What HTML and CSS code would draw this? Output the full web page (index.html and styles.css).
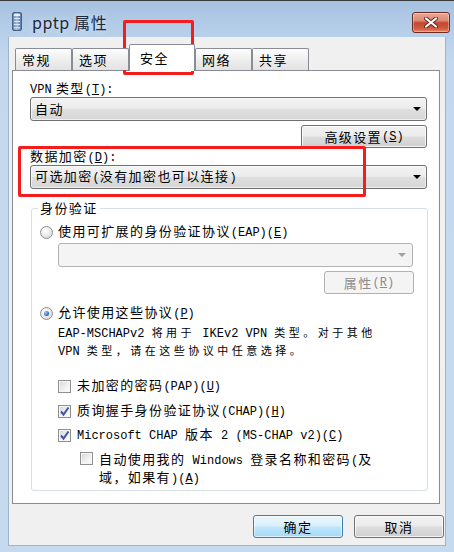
FILE: index.html
```html
<!DOCTYPE html>
<html>
<head>
<meta charset="utf-8">
<link rel="stylesheet" href="styles.css">
</head>
<body>
<div class="window">
  <div class="titlebar">
    <svg class="app-icon" width="10" height="19" viewBox="0 0 10 19">
      <defs>
        <linearGradient id="ig" x1="0" y1="0" x2="1" y2="0">
          <stop offset="0" stop-color="#5d7fae"/>
          <stop offset="0.5" stop-color="#a9c0de"/>
          <stop offset="1" stop-color="#4d6d9c"/>
        </linearGradient>
      </defs>
      <rect x="0.5" y="0.5" width="9" height="18" rx="1.5" fill="url(#ig)" stroke="#4a6288"/>
      <rect x="2" y="2" width="6" height="2" fill="#e8f0fa"/>
      <rect x="2" y="6" width="6" height="1" fill="#dce6f4"/>
      <rect x="2" y="9" width="6" height="1" fill="#dce6f4"/>
      <rect x="2" y="12" width="6" height="1" fill="#dce6f4"/>
      <rect x="2" y="15" width="6" height="1.5" fill="#c9d7ec"/>
    </svg>
    <span class="title">pptp 属性</span>
    <div class="close">
      <svg width="16" height="11" viewBox="0 0 16 11">
        <path d="M3 1.5 L13 9.5 M13 1.5 L3 9.5" stroke="#5b2a22" stroke-width="4" stroke-linecap="round"/>
        <path d="M3 1.5 L13 9.5 M13 1.5 L3 9.5" stroke="#ffffff" stroke-width="2.2" stroke-linecap="round"/>
      </svg>
    </div>
  </div>
  <div class="client">
    <div class="tabs">
      <div class="tab">常规</div>
      <div class="tab">选项</div>
      <div class="tab active">安全</div>
      <div class="tab">网络</div>
      <div class="tab">共享</div>
    </div>
    <div class="panel">
      <div class="label"><span class="m">VPN</span> 类型<span class="m">(<u>T</u>):</span></div>
      <div class="combo"><span>自动</span><span class="arrow"></span></div>
      <div class="btn-row"><div class="btn adv">高级设置<span class="m">(<u>S</u>)</span></div></div>
      <div class="label label2">数据加密<span class="m">(<u>D</u>):</span></div>
      <div class="combo"><span>可选加密<span class="m">(</span>没有加密也可以连接<span class="m">)</span></span><span class="arrow"></span></div>
      <fieldset class="group">
        <legend>身份验证</legend>
        <div class="radio-row first"><span class="radio"></span><span>使用可扩展的身份验证协议<span class="m">(EAP)(<u>E</u>)</span></span></div>
        <div class="combo disabled"><span class="arrow"></span></div>
        <div class="btn-row"><div class="btn disabled">属性<span class="m">(<u>R</u>)</span></div></div>
        <div class="radio-row second"><span class="radio checked"></span><span>允许使用这些协议<span class="m">(<u>P</u>)</span></span></div>
        <div class="note"><span class="m">EAP-MSCHAPv2 </span>将用于<span class="m"> IKEv2 VPN </span>类型。对于其他<br><span class="m">VPN </span>类型，请在这些协议中任意选择。</div>
        <div class="check-row pap"><span class="cb"></span><span>未加密的密码<span class="m">(PAP)(<u>U</u>)</span></span></div>
        <div class="check-row chap"><span class="cb checked"><svg width="11" height="11" viewBox="0 0 11 11"><path d="M2 5.5 L4.5 8.5 L9.5 1.5" fill="none" stroke="#3f55a0" stroke-width="2"/></svg></span><span>质询握手身份验证协议<span class="m">(CHAP)(<u>H</u>)</span></span></div>
        <div class="check-row mschap"><span class="cb checked"><svg width="11" height="11" viewBox="0 0 11 11"><path d="M2 5.5 L4.5 8.5 L9.5 1.5" fill="none" stroke="#3f55a0" stroke-width="2"/></svg></span><span><span class="m">Microsoft CHAP </span>版本<span class="m"> 2 (MS-CHAP v2)(<u>C</u>)</span></span></div>
        <div class="check-row auto"><span class="cb"></span><span class="auto-text">自动使用我的<span class="m"> Windows </span>登录名称和密码<span class="m">(</span>及<br>域，如果有<span class="m">)(<u>A</u>)</span></span></div>
      </fieldset>
    </div>
    <div class="footer">
      <div class="btn default">确定</div>
      <div class="btn">取消</div>
    </div>
  </div>
  <div class="redbox r1"></div>
  <div class="redbox r2"></div>
</div>
</body>
</html>
```

FILE: styles.css
```css
* { box-sizing: border-box; }
html, body { margin: 0; padding: 0; }
body {
  width: 454px;
  height: 552px;
  overflow: hidden;
  background: #c4d8ee;
  font-family: "Noto Sans CJK SC", "Noto Sans", sans-serif;
  font-size: 13px;
  letter-spacing: 1.4px;
  color: #000;
}
.m {
  font-family: "Liberation Mono", "Noto Sans CJK SC", monospace;
  font-size: 12px;
  letter-spacing: 0;
}
u { text-decoration: underline; text-underline-offset: 1px; }

.window {
  position: relative;
  width: 454px;
  height: 552px;
  border-top: 1px solid #3a3a3a;
  background: linear-gradient(#a6c2e1 0, #b9d0ea 36px, #c3d8ee 60px, #c6daef);
  display: flex;
  flex-direction: column;
}
.titlebar {
  height: 36px;
  display: flex;
  align-items: flex-start;
  padding: 11px 4px 0 12px;
}
.app-icon { flex: none; display: block; }
.title {
  margin-left: 10px;
  font-size: 16px;
  line-height: 20px;
  letter-spacing: 0.6px;
  color: #1d2a3c;
  text-shadow: 0 0 6px rgba(255,255,255,0.7);
}
.close {
  margin-left: auto;
  width: 38px;
  height: 21px;
  border: 1px solid #6a2c22;
  border-radius: 3px;
  background: linear-gradient(#eaa795 0, #d98a76 40%, #c5462f 52%, #cf5a3e 80%, #e3866a);
  box-shadow: inset 0 0 0 1px rgba(255,255,255,0.35);
  display: flex;
  align-items: center;
  justify-content: center;
}
.close svg { display: block; }

.client {
  flex: none;
  margin: 0 8px;
  height: 509px;
  background: #f0f0f0;
  border: 1px solid #9fb3ca;
  border-top: none;
  padding-top: 7px;
  display: flex;
  flex-direction: column;
}

.tabs {
  display: flex;
  align-items: flex-end;
  padding-left: 6px;
  height: 26px;
  position: relative;
  z-index: 1;
}
.tab {
  width: 57px;
  height: 22px;
  border: 1px solid #898c95;
  border-bottom: none;
  border-radius: 2px 2px 0 0;
  background: linear-gradient(#fdfdfd, #ececec 60%, #e3e3e3);
  display: flex;
  align-items: center;
  padding-left: 6px;
  line-height: 16px;
}
.tab.active {
  width: 66px;
  height: 27px;
  margin-bottom: -1px;
  background: #fff;
  padding-left: 10px;
  padding-bottom: 1px;
}

.panel {
  margin-left: 3px;
  width: 428px;
  height: 434px;
  background: #fff;
  border: 1px solid #898c95;
  padding: 0 12px 0 17px;
  display: flex;
  flex-direction: column;
}
.label {
  margin-top: 9px;
  line-height: 16px;
  height: 16px;
}
.label2 { margin-top: 0; }

.combo {
  margin-top: 1px;
  height: 24px;
  border: 1px solid #707070;
  border-radius: 3px;
  background: linear-gradient(#f3f3f3, #ebebeb 48%, #dedede 52%, #d6d6d6);
  box-shadow: inset 0 0 0 1px rgba(255,255,255,0.6);
  display: flex;
  align-items: center;
  padding-left: 4px;
  line-height: 16px;
}
.arrow {
  margin-left: auto;
  margin-right: 5px;
  width: 0;
  height: 0;
  border-left: 4px solid transparent;
  border-right: 4px solid transparent;
  border-top: 4px solid #000;
}
.combo.disabled {
  margin: 2px 14px 0 26px;
  border-color: #afb3b6;
  background: #f4f4f4;
  box-shadow: none;
}
.combo.disabled .arrow { border-top-color: #a0a0a0; margin-right: 6px; }

.btn-row {
  display: flex;
  justify-content: flex-end;
  margin-top: 4px;
}
.btn {
  height: 23px;
  width: 90px;
  border: 1px solid #707070;
  border-radius: 3px;
  background: linear-gradient(#f2f2f2, #ebebeb 48%, #dddddd 52%, #cfcfcf);
  box-shadow: inset 0 0 0 1px rgba(255,255,255,0.75);
  display: flex;
  align-items: center;
  justify-content: center;
  line-height: 16px;
}
.btn.adv { width: 126px; }
.btn.disabled {
  border-color: #adb2b5;
  background: #f4f4f4;
  box-shadow: none;
  color: #8d8d8d;
}
.group .btn-row { margin-right: 13px; }
.btn.default {
  border-color: #3c7fb1;
  background: linear-gradient(#eaf6fd, #d9f0fc 48%, #bee6fd 52%, #a7d9f5);
  box-shadow: inset 0 0 0 1px rgba(255,255,255,0.6);
}

.group {
  margin: 11px 0 0 1px;
  padding: 0 0 3px 0;
  min-width: 0;
  width: 397px;
  border: 1px solid #d5dfe5;
  border-radius: 3px;
}
.group legend {
  margin-left: 6px;
  padding: 0 2px;
  line-height: 16px;
}

.radio-row, .check-row {
  display: flex;
  align-items: center;
  height: 18px;
  line-height: 16px;
}
.radio-row { padding-left: 8px; gap: 5px; }
.radio-row.first { margin-top: 7px; }
.radio-row.second { margin-top: 10px; }
.radio {
  flex: none;
  width: 13px;
  height: 13px;
  border-radius: 50%;
  border: 1px solid #8e8f8f;
  background: radial-gradient(circle at 40% 35%, #ffffff 0, #ececec 45%, #cfcfcf 100%);
  display: flex;
  align-items: center;
  justify-content: center;
}
.radio.checked::after {
  content: "";
  width: 5px;
  height: 5px;
  border-radius: 50%;
  background: radial-gradient(circle at 35% 35%, #a9d1f5 0, #3e7bc4 50%, #1d4f91 100%);
}

.note {
  margin: 2px 0 0 26px;
  font-size: 11px;
  letter-spacing: 3.5px;
  line-height: 16px;
}
.note .m { font-size: 12px; letter-spacing: 0; }

.check-row { padding-left: 26px; gap: 6px; }
.check-row.pap { margin-top: 17px; }
.check-row.chap { margin-top: 7px; }
.check-row.mschap { margin-top: 6px; }
.check-row.auto {
  margin-top: 7px;
  height: auto;
  align-items: flex-start;
  padding-left: 48px;
}
.cb {
  flex: none;
  width: 13px;
  height: 13px;
  border: 1px solid #8e8f8f;
  background: linear-gradient(135deg, #d6d6d6, #f2f2f2 60%, #ffffff);
  box-shadow: inset 0 0 0 1px #f6f6f6;
  display: flex;
  align-items: center;
  justify-content: center;
}
.cb svg { display: block; }
.check-row.auto .cb { margin-top: 1px; }
.auto-text { line-height: 16px; }

.footer {
  display: flex;
  justify-content: flex-end;
  gap: 11px;
  margin-top: 11px;
  padding-right: 1px;
}

.redbox {
  position: absolute;
  border: 3px solid #f51c1c;
  border-radius: 2px;
  pointer-events: none;
}
.r1 { left: 123px; top: 19px; width: 71px; height: 55px; }
.r2 { left: 18px; top: 145px; width: 348px; height: 51px; }
```
